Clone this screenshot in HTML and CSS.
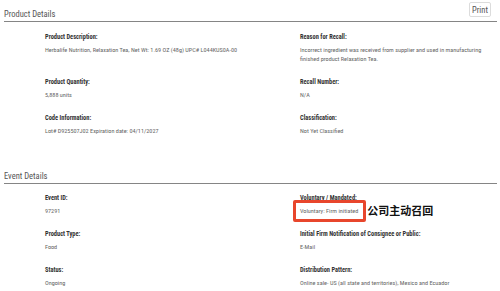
FILE: index.html
```html
<!DOCTYPE html>
<html lang="en">
<head>
<meta charset="utf-8">
<link rel="stylesheet" href="styles.css">
</head>
<body>
<section class="section">
  <div class="section-head">
    <h2 class="section-title">Product Details</h2>
    <button class="print-btn">Print</button>
  </div>
  <div class="grid">
    <div class="field">
      <div class="label">Product Description:</div>
      <div class="value">Herbalife Nutrition, Relaxation Tea, Net Wt: 1.69 OZ (48g) UPC# L044KUS0A-00</div>
    </div>
    <div class="field">
      <div class="label">Reason for Recall:</div>
      <div class="value">Incorrect ingredient was received from supplier and used in manufacturing finished product Relaxation Tea.</div>
    </div>
    <div class="field">
      <div class="label">Product Quantity:</div>
      <div class="value">5,888 units</div>
    </div>
    <div class="field">
      <div class="label">Recall Number:</div>
      <div class="value">N/A</div>
    </div>
    <div class="field">
      <div class="label">Code Information:</div>
      <div class="value">Lot# D925507J02 Expiration date: 04/11/2027</div>
    </div>
    <div class="field">
      <div class="label">Classification:</div>
      <div class="value">Not Yet Classified</div>
    </div>
  </div>
</section>
<section class="section section-event">
  <div class="section-head">
    <h2 class="section-title">Event Details</h2>
  </div>
  <div class="grid">
    <div class="field">
      <div class="label">Event ID:</div>
      <div class="value">97291</div>
    </div>
    <div class="field">
      <div class="label">Voluntary / Mandated:</div>
      <div class="value"><span class="marked">Voluntary: Firm initiated<span class="mark-box"></span><span class="mark-note">公司主动召回</span></span></div>
    </div>
    <div class="field">
      <div class="label">Product Type:</div>
      <div class="value">Food</div>
    </div>
    <div class="field">
      <div class="label">Initial Firm Notification of Consignee or Public:</div>
      <div class="value">E-Mail</div>
    </div>
    <div class="field">
      <div class="label">Status:</div>
      <div class="value">Ongoing</div>
    </div>
    <div class="field">
      <div class="label">Distribution Pattern:</div>
      <div class="value">Online sale- US (all state and territories), Mexico and Ecuador</div>
    </div>
  </div>
</section>
</body>
</html>
```
FILE: styles.css
```css
* { box-sizing: border-box; }
html, body { margin: 0; padding: 0; background: #fff; }
body {
  font-family: "Roboto Condensed", "DejaVu Sans Condensed", "Liberation Sans Narrow", Roboto, sans-serif;
  font-stretch: condensed;
  color: #555;
  width: 500px;
  height: 291px;
  overflow: hidden;
}
.section { margin: 0 3px 0 4px; }
.section-head {
  display: flex;
  justify-content: space-between;
  align-items: flex-end;
  border-bottom: 1.5px solid #858585;
  height: 22px;
  padding-bottom: 1px;
}
.section-title {
  margin: 0;
  font-size: 8.5px;
  line-height: 12px;
  font-weight: normal;
  color: #555;
}
.print-btn {
  font-family: inherit;
  font-size: 8.5px;
  color: #555;
  background: #fff;
  border: 1px solid #dcdcdc;
  border-radius: 2px;
  width: 22px;
  height: 15px;
  padding: 0;
  margin: 0 6px 3px 0;
}
.grid {
  display: grid;
  grid-template-columns: 255px 192px;
  padding: 10.5px 0 0 41px;
}
.field { margin-bottom: 13.3px; }
.label {
  font-size: 6.4px;
  line-height: 8px;
  font-weight: bold;
  color: #333;
}
.value {
  margin-top: 5px;
  font-size: 6.2px;
  line-height: 9.5px;
  color: #666;
}
.section-event { margin-top: 12.5px; }
.marked { position: relative; }
.mark-box {
  position: absolute;
  left: -7px;
  right: -8px;
  top: -7px;
  bottom: -7px;
  border: 3px solid #e8462c;
  border-radius: 2px;
}
.mark-note {
  position: absolute;
  left: calc(100% + 9px);
  top: -4px;
  white-space: nowrap;
  font-family: "Noto Sans CJK SC", sans-serif;
  font-size: 11px;
  line-height: 14px;
  font-weight: bold;
  color: #111;
}
```
